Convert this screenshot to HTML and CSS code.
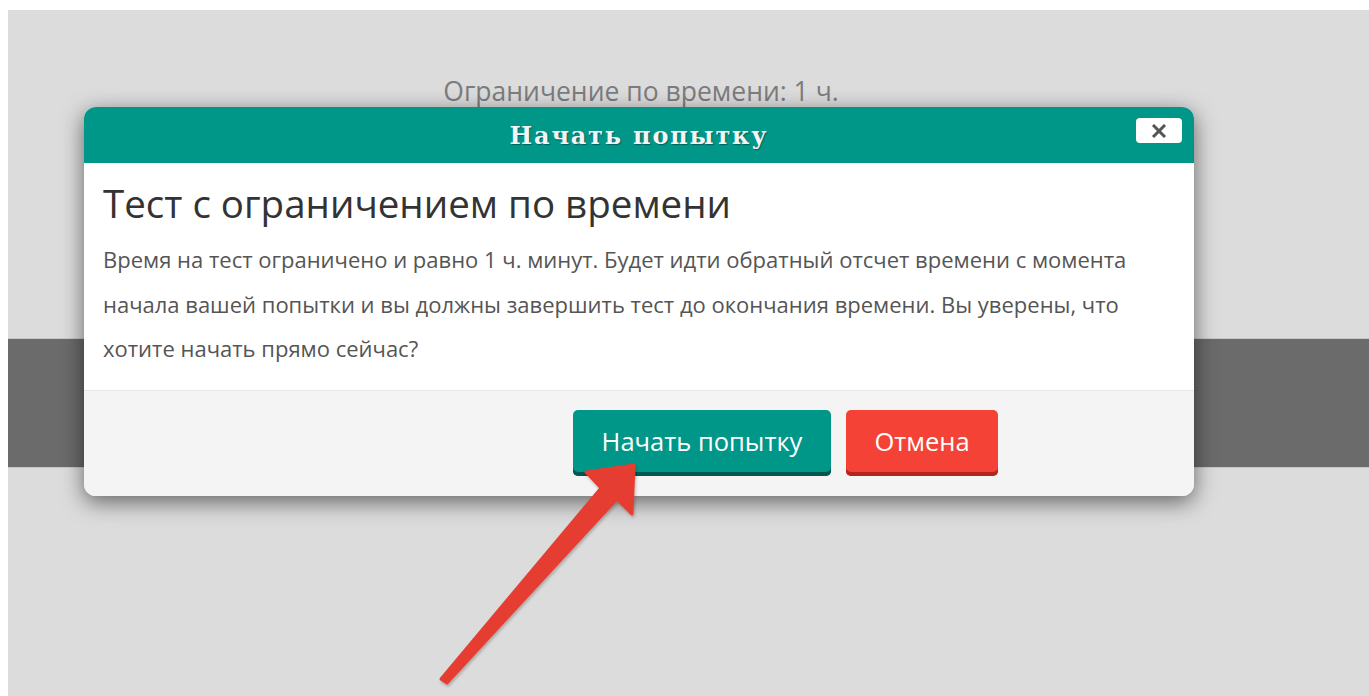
FILE: index.html
```html
<!DOCTYPE html>
<html lang="ru">
<head>
<meta charset="utf-8">
<title>Начать попытку</title>
<link rel="stylesheet" href="styles.css">
</head>
<body>
<div class="page">
  <p class="limit">Ограничение по времени: 1 ч.</p>
  <div class="band"></div>

  <div class="modal" role="dialog">
    <div class="modal-head">
      <h2 class="modal-title">Начать попытку</h2>
      <button class="close" type="button" aria-label="Закрыть">
        <svg width="16" height="14" viewBox="0 0 16 14"><path d="M2 1 L14 13 M14 1 L2 13" stroke="#555" stroke-width="3" stroke-linecap="butt"/></svg>
      </button>
    </div>
    <div class="modal-body">
      <h3 class="body-title">Тест с ограничением по времени</h3>
      <p class="body-text">Время на тест ограничено и равно 1 ч. минут. Будет идти обратный отсчет времени с момента начала вашей попытки и вы должны завершить тест до окончания времени. Вы уверены, что хотите начать прямо сейчас?</p>
    </div>
    <div class="modal-foot">
      <button class="btn btn-start" type="button">Начать попытку</button>
      <button class="btn btn-cancel" type="button">Отмена</button>
    </div>
  </div>

  <svg class="pointer" width="1369" height="696" viewBox="0 0 1369 696">
    <defs>
      <filter id="soft" x="-20%" y="-20%" width="140%" height="140%">
        <feDropShadow dx="1" dy="2" stdDeviation="1.5" flood-color="#000" flood-opacity="0.25"/>
      </filter>
    </defs>
    <path filter="url(#soft)" fill="#e53d30" stroke="#e53d30" stroke-width="3" stroke-linejoin="round" stroke-linecap="round"
      d="M441 679 L601 488 L586 472 L634 465 L632 514 L617 499 L447 683 Z"/>
  </svg>
</div>
</body>
</html>
```
FILE: styles.css
```css
html, body {
  margin: 0;
  padding: 0;
  background: #ffffff;
  height: 100%;
  overflow: hidden;
}

.page {
  position: relative;
  margin: 10px 0 0 8px;
  height: 686px;
  background: #dcdcdc;
  font-family: "Open Sans", "Noto Sans", sans-serif;
}

.limit {
  margin: 0;
  padding: 64px 0 0 0;
  width: 1266px;
  text-align: center;
  font-size: 26.5px;
  line-height: 34px;
  color: #7d7d7d;
}

.band {
  margin-top: 230px;
  height: 128px;
  background: #6b6b6b;
  border-top: 1px solid #c8c8c8;
  border-bottom: 1px solid #c8c8c8;
}

.modal {
  position: absolute;
  left: 76px;
  top: 97px;
  width: 1110px;
  height: 389px;
  border-radius: 12px;
  background: #ffffff;
  box-shadow: 0 6px 22px rgba(0, 0, 0, 0.55);
  display: flex;
  flex-direction: column;
  overflow: hidden;
}

.modal-head {
  position: relative;
  height: 56px;
  flex: none;
  background: #009688;
  display: flex;
  align-items: center;
  justify-content: center;
}

.modal-title {
  margin: 0;
  font-family: "DejaVu Serif", "Liberation Serif", serif;
  font-weight: bold;
  font-size: 24px;
  letter-spacing: 1.8px;
  color: #f4f4f4;
  text-shadow: 1px 1px 1px rgba(0, 0, 0, 0.35);
}

.close {
  position: absolute;
  right: 12px;
  top: 11px;
  width: 46px;
  height: 25px;
  padding: 0;
  border: none;
  border-radius: 4px;
  background: #ffffff;
  display: flex;
  align-items: center;
  justify-content: center;
}

.modal-body {
  height: 227px;
  flex: none;
  padding: 0 19px;
  border-bottom: 1px solid #e6e6e6;
}

.body-title {
  margin: 14px 0 0 0;
  font-weight: normal;
  font-size: 38.5px;
  line-height: 52px;
  color: #333333;
}

.body-text {
  margin: 8px 0 0 0;
  font-size: 22px;
  line-height: 44.5px;
  color: #555555;
}

.modal-foot {
  flex: 1;
  background: #f4f4f4;
  display: flex;
  align-items: flex-start;
  padding: 19px 0 0 489px;
  gap: 15px;
}

.btn {
  height: 66px;
  padding: 0 0 4px 0;
  border: none;
  border-radius: 5px;
  font-family: "Open Sans", "Noto Sans", sans-serif;
  font-size: 25.5px;
  color: #ffffff;
}

.btn-start {
  width: 258px;
  background: #009688;
  box-shadow: inset 0 -4px 0 #00574e;
}

.btn-cancel {
  width: 152px;
  background: #f44336;
  box-shadow: inset 0 -4px 0 #b3261b;
}

.pointer {
  position: absolute;
  left: -8px;
  top: -10px;
  pointer-events: none;
}
```
